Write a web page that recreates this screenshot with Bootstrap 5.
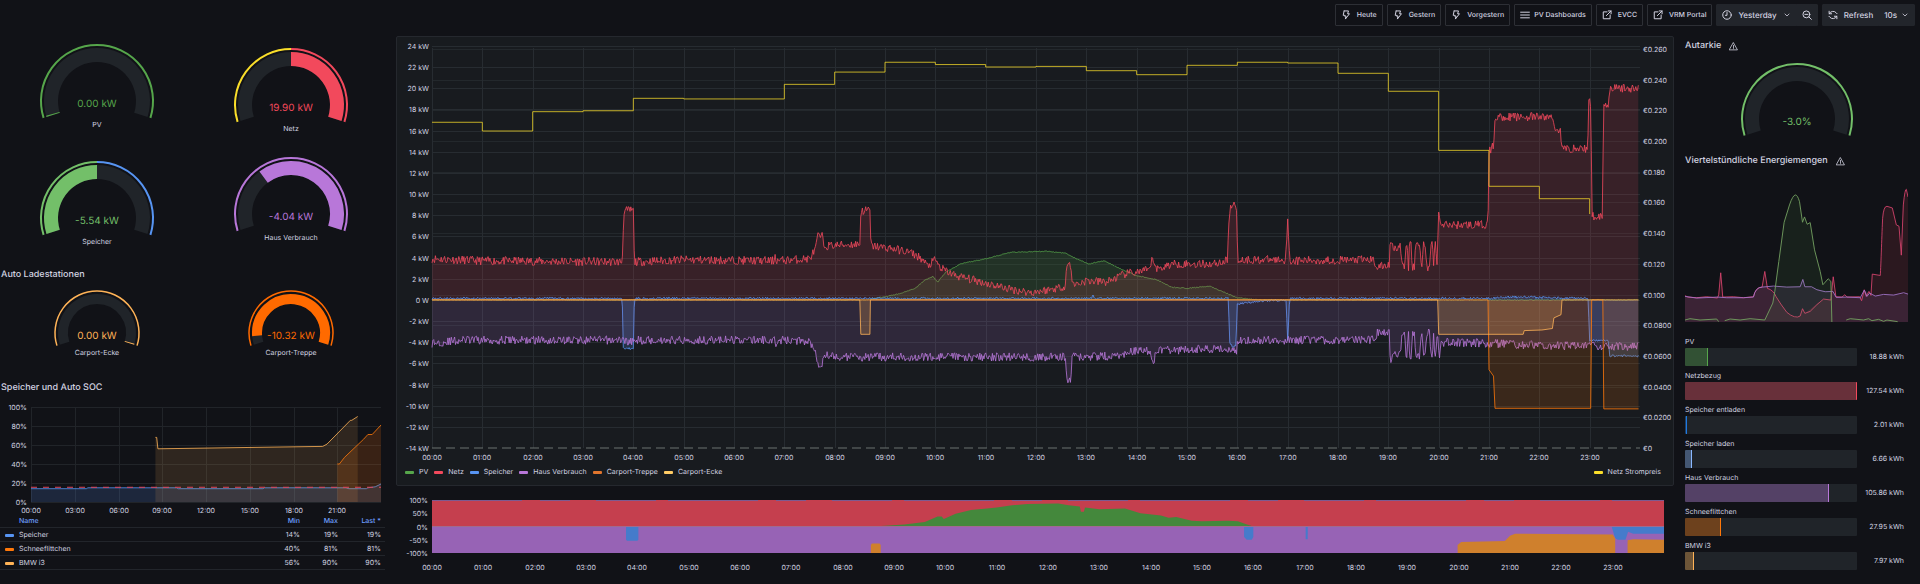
<!DOCTYPE html>
<html lang="de" data-bs-theme="dark">
<head>
<meta charset="utf-8">
<meta name="viewport" content="width=device-width, initial-scale=1">
<title>PV Dashboard</title>
<link href="https://cdn.jsdelivr.net/npm/bootstrap@5.3.0/dist/css/bootstrap.min.css" rel="stylesheet">
<style>
:root{--page:#111217;--panel:#181b1f;--line:#25282e;--ink:#d2d2e0;--track:#202429}
body{background:var(--page);color:var(--ink);font-family:Inter,"Liberation Sans",sans-serif;font-size:7px;line-height:12px;text-rendering:geometricPrecision}
button,a{text-rendering:inherit}
svg{display:block;overflow:hidden}
svg text{fill:var(--ink);font-size:7px}
.topbar{height:32px;padding:0 5px 6px}
.tool{--bs-btn-color:var(--ink);--bs-btn-font-size:7px;--bs-btn-line-height:12px;--bs-btn-padding-x:5px;--bs-btn-padding-y:0;--bs-btn-font-weight:500;--bs-btn-border-radius:1px;--bs-btn-border-color:#2d2f35;--bs-btn-hover-bg:#22252b;--bs-btn-hover-color:#fff;height:22px;display:flex;align-items:center;gap:6px;white-space:nowrap}
.tool-filled{--bs-btn-bg:#22252b;--bs-btn-border-color:#22252b;--bs-btn-font-size:8px}
.dash-menu{gap:4px}
.tool svg{width:10px;height:10px}
.tool svg.chev{width:8px;height:8px}
.icon{fill:none;stroke:currentColor;stroke-width:1.6;stroke-linecap:round;stroke-linejoin:round}
.board{display:grid;grid-template-columns:395fr 1279fr 246fr}
.board>*{min-width:0}
h2{font-size:9px;line-height:12px;font-weight:500;margin:0;color:var(--ink)}
.panel-title{padding-left:1px}
.gauges{padding-right:7px}
.lane-a{padding-top:11px;gap:29px}
.lane-b{padding-top:15px;gap:21px}
.power{height:237px}
.gauge{text-align:center}
.gauge svg{margin:0 auto}
.gauge svg text{font-size:10px;text-anchor:middle}
.chargers{padding-top:8px;height:101px}
.autarky{margin-top:10px;margin-bottom:18px}
.soc{padding-left:4px;padding-right:9px}
.legend-table{--bs-table-bg:transparent;--bs-table-color:var(--ink);--bs-table-border-color:#22252b;font-size:7px;line-height:12px;width:385px;margin:0}
.legend-table>:not(caption)>*>*{padding:1px 0 0;text-align:right}
.legend-table>:not(caption)>*>:first-child{text-align:left;padding-left:5px}
.legend-table>:not(caption)>*>:last-child{padding-right:4px}
.legend-table th{font-weight:500}
.legend-table thead th{color:#6e9fff}
.legend-table thead th:first-child{text-indent:14px}
.legend-table tbody th{font-weight:400}
.swatch{display:inline-block;width:9px;height:3px;border-radius:1px;margin-right:5px;vertical-align:middle}
.main-panel{--bs-card-bg:var(--panel);--bs-card-border-color:var(--line);--bs-card-border-radius:2px;margin:4px 0 0 1px;height:450px}
.plot-legend{padding:2px 12px 0 8px;gap:6px}
.share{margin:4px 0 0 2px}
.side{padding:8px 12px 0 11px}
.side h2{gap:8px}
.side .icon{width:9px;height:9px;stroke-width:1.4}
.energy{height:138px;margin-top:18px}
.energy svg{width:100%;height:100%}
.energy path{vector-effect:non-scaling-stroke;stroke-width:1}
.usage{padding:13px 4px 0 0;gap:4px}
.bar-track{--bs-progress-height:18px;--bs-progress-bg:var(--track);--bs-progress-border-radius:1px;flex:1 1 auto}
.bar-fill{border-right:1px solid}
.bar-value{width:47px;text-align:right;white-space:nowrap}
</style>
</head>
<body>
<svg width="0" height="0" class="position-absolute" aria-hidden="true">
  <symbol id="bolt" viewBox="0 0 16 16"><path d="M5 1.500h7L10.500 6h3L7 14.500 8 9.500H5.500M5 1.500 3.500 8.500h2"/></symbol>
  <symbol id="menu" viewBox="0 0 16 16"><path d="M1 3.500h14M1 8h14M1 12.500h14"/></symbol>
  <symbol id="ext" viewBox="0 0 16 16"><path d="M8 3H2v11h11V8M10 1.500h4.500V6M14.500 1.500 7 9"/></symbol>
  <symbol id="clock" viewBox="0 0 16 16"><circle cx="8" cy="8" r="6.800"/><path d="M8 4v4.500H5.500"/></symbol>
  <symbol id="chev" viewBox="0 0 16 16"><path d="m4 6 4 4 4-4"/></symbol>
  <symbol id="zoom" viewBox="0 0 16 16"><circle cx="7" cy="7" r="5.500"/><path d="M4.500 7h5M11 11l4 4"/></symbol>
  <symbol id="sync" viewBox="0 0 16 16"><path d="M2 6a6.500 6.500 0 0 1 11-1.500L14.500 6M14 10a6.500 6.500 0 0 1-11 1.500L1.500 10M1.800 2v4h4M14.200 14v-4h-4"/></symbol>
  <symbol id="warn" viewBox="0 0 16 16"><path d="M8 1.500 15 14H1ZM8 6v4M8 11.800v.2"/></symbol>
</svg>

<header class="topbar d-flex justify-content-end align-items-end gap-1">
  <button type="button" class="btn tool"><svg class="icon"><use href="#bolt"/></svg>Heute</button>
  <button type="button" class="btn tool"><svg class="icon"><use href="#bolt"/></svg>Gestern</button>
  <button type="button" class="btn tool"><svg class="icon"><use href="#bolt"/></svg>Vorgestern</button>
  <button type="button" class="btn tool dash-menu"><svg class="icon"><use href="#menu"/></svg>PV Dashboards</button>
  <a href="#evcc" class="btn tool"><svg class="icon"><use href="#ext"/></svg>EVCC</a>
  <a href="#vrm" class="btn tool"><svg class="icon"><use href="#ext"/></svg>VRM Portal</a>
  <div class="btn-group">
    <button type="button" class="btn tool tool-filled"><svg class="icon"><use href="#clock"/></svg>Yesterday<svg class="icon chev"><use href="#chev"/></svg></button>
    <button type="button" class="btn tool tool-filled" aria-label="Zoom out"><svg class="icon"><use href="#zoom"/></svg></button>
  </div>
  <div class="btn-group">
    <button type="button" class="btn tool tool-filled"><svg class="icon"><use href="#sync"/></svg>Refresh</button>
    <button type="button" class="btn tool tool-filled gap-1">10s<svg class="icon chev"><use href="#chev"/></svg></button>
  </div>
</header>

<main class="board">
  <section>
    <div class="gauges power row g-0">
      <div class="col-6 lane-a d-flex flex-column">
        <div class="gauge" data-gauge="57" data-value="0.00 kW" data-color="#56a64b" data-from="0" data-to="0.006"><div>PV</div></div>
        <div class="gauge" data-gauge="57" data-value="-5.54 kW" data-color="#73bf69" data-from="0" data-to="0.5" data-rest="#5794f2"><div>Speicher</div></div>
      </div>
      <div class="col-6 lane-b d-flex flex-column">
        <div class="gauge" data-gauge="57" data-value="19.90 kW" data-color="#f2495c" data-from="0.5" data-to="1" data-rest="#fade2a"><div>Netz</div></div>
        <div class="gauge" data-gauge="57" data-value="-4.04 kW" data-color="#b877d9" data-from="0.33" data-to="1"><div>Haus Verbrauch</div></div>
      </div>
    </div>
    <h2 class="panel-title">Auto Ladestationen</h2>
    <div class="gauges chargers row g-0">
      <div class="col-6 gauge" data-gauge="43" data-value="0.00 kW" data-color="#ffb357" data-from="0.993" data-to="1"><div>Carport-Ecke</div></div>
      <div class="col-6 gauge" data-gauge="43" data-value="-10.32 kW" data-color="#ff6a00" data-from="0.06" data-to="1"><div>Carport-Treppe</div></div>
    </div>
    <h2 class="panel-title">Speicher und Auto SOC</h2>
    <div class="soc" id="soc"></div>
    <table class="table legend-table">
      <colgroup><col><col style="width:38px"><col style="width:38px"><col style="width:47px"></colgroup>
      <thead><tr><th scope="col">Name</th><th scope="col">Min</th><th scope="col">Max</th><th scope="col">Last *</th></tr></thead>
      <tbody>
        <tr><th scope="row"><span class="swatch" style="background:#5794f2"></span>Speicher</th><td>14%</td><td>19%</td><td>19%</td></tr>
        <tr><th scope="row"><span class="swatch" style="background:#ff780a"></span>Schneeflittchen</th><td>40%</td><td>81%</td><td>81%</td></tr>
        <tr><th scope="row"><span class="swatch" style="background:#ffb357"></span>BMW i3</th><td>56%</td><td>90%</td><td>90%</td></tr>
      </tbody>
    </table>
  </section>

  <section>
    <div class="card main-panel">
      <div id="power"></div>
      <div class="plot-legend d-flex">
        <span><span class="swatch" style="background:#56a64b"></span>PV</span>
        <span><span class="swatch" style="background:#f2495c"></span>Netz</span>
        <span><span class="swatch" style="background:#5794f2"></span>Speicher</span>
        <span><span class="swatch" style="background:#b877d9"></span>Haus Verbrauch</span>
        <span><span class="swatch" style="background:#e0752d"></span>Carport-Treppe</span>
        <span><span class="swatch" style="background:#ffcb65"></span>Carport-Ecke</span>
        <span class="ms-auto"><span class="swatch" style="background:#fade2a"></span>Netz Strompreis</span>
      </div>
    </div>
    <div class="share" id="share"></div>
  </section>

  <aside class="side">
    <h2 class="d-flex align-items-center">Autarkie<svg class="icon"><use href="#warn"/></svg></h2>
    <div class="gauge autarky" data-gauge="56" data-value="-3.0%" data-color="#73bf69" data-from="0" data-to="0"></div>
    <h2 class="d-flex align-items-center">Viertelstündliche Energiemengen<svg class="icon"><use href="#warn"/></svg></h2>
    <div class="energy">
      <svg viewBox="75 460 668 415" preserveAspectRatio="none" aria-hidden="true">
        <path fill="#f2495c" fill-opacity=".12" stroke="none" d="M75 797 174 799 182 724 190 799 280 797Q286 767 306 767L314 720 322 771Q340 776 348 796L380 843Q405 870 420 852L427 832 434 846 450 833 470 817 490 803 512 806 519 736 527 796 604 799 612 780 632 792 636 728 660 732C662 700 665 600 667 560Q670 523 680 524L696 529 708 580 716 584 723 671 729 520Q734 470 738 473L743 496V872H75Z"/>
        <path fill="#b877d9" fill-opacity=".12" stroke="none" d="M75 797 280 798Q286 767 306 767L420 766 427 744 434 766 450 766Q480 780 520 780L528 796 600 798 612 776 640 793 743 788V872H75Z"/>
        <path fill="none" stroke="#d9446f" stroke-opacity=".85" d="M75 793 84 797 110 799 140 796 172 800 176 790 182 724 188 797 220 796 250 799 280 796Q286 767 306 767L314 720 322 771Q340 776 348 796L362 818 380 843Q405 864 420 854L427 832 434 846 450 840 470 820 490 803 512 806 519 736 527 796 545 797 554 790 560 797 598 796 604 808 612 775 618 795 626 780 632 792 636 728 660 732C662 700 665 600 667 560Q670 523 680 524L696 529 708 580 716 584 723 671 729 520Q734 470 738 473L743 496"/>
        <path fill="none" stroke="#a477cf" stroke-opacity=".85" d="M75 795 110 800 172 797 200 799 250 799 280 797Q286 767 306 767L340 764 380 767 420 766 428 744 434 766 454 766 470 775 495 781 518 780 528 798 560 797 600 799 612 776 620 795 628 785 645 794 670 789 700 791 730 784 743 788"/>
        <path fill="#56a64b" fill-opacity=".1" stroke="#73a060" stroke-opacity=".9" d="M75 866 90 862 120 866 170 863 176 871M194 868 210 863 240 866 270 862 314 866 338 815 344 780 356 690 372 572 388 520Q398 490 406 490 412 490 418 510L427 572 433 556 441 578 450 573 463 655 480 720 488 760 504 742 512 750 515 872M558 866 570 862 610 866 625 862 635 868 655 864 670 870 680 866 712 871"/>
      </svg>
    </div>
    <div class="usage d-flex flex-column" id="usage"></div>
  </aside>
</main>

<script src="https://cdn.jsdelivr.net/npm/bootstrap@5.3.0/dist/js/bootstrap.bundle.min.js"></script>
<script>
const polar = (c, cy, r, f) => {
  const a = (197.5 - f * 215) * Math.PI / 180;
  return [c + r * Math.cos(a), cy - r * Math.sin(a)].map(v => v.toFixed(2)).join(' ');
};
const ring = (c, cy, r, f, t, color, w) =>
  `<path d="M${polar(c, cy, r, f)}A${r} ${r} 0 ${(t - f) * 215 > 180 ? 1 : 0} 1 ${polar(c, cy, r, t)}" fill="none" stroke="${color}" stroke-width="${w}"/>`;

document.querySelectorAll('[data-gauge]').forEach(el => {
  const r = +el.dataset.gauge, { value, color, rest } = el.dataset;
  const f = +el.dataset.from, t = +el.dataset.to;
  const c = r + 3, cy = r + 1, h = r > 50 ? cy + 18 : cy + 14;
  const w = r > 50 ? 14 : 10, mid = r - 4 - w / 2;
  let s = ring(c, cy, mid, 0, 1, '#202429', w);
  if (t > f) s += ring(c, cy, mid, f, t, color, w);
  if (rest) s += ring(c, cy, r - 1, 0, .5, f ? rest : color, 2) + ring(c, cy, r - 1, .5, 1, f ? color : rest, 2);
  else s += ring(c, cy, r - 1, 0, 1, color, r > 50 ? 2 : 1.5);
  s += `<text x="${c}" y="${cy + 6}" style="fill:${color}">${value}</text>`;
  el.insertAdjacentHTML('afterbegin', `<svg width="${2 * c}" height="${h}">${s}</svg>`);
});

/* pseudo random values with a fixed seed, so each redraw looks the same */
const rng = seed => () => (seed = (seed * 16807) % 2147483647) / 2147483647 - .5;
const at = (pts, h) => {
  for (let i = 1; i < pts.length; i++)
    if (h <= pts[i][0]) {
      const [a, va] = pts[i - 1], [b, vb] = pts[i];
      return b === a ? vb : va + (vb - va) * (h - a) / (b - a);
    }
  return pts[pts.length - 1][1];
};
const noisy = (pts, amp, seed) => {
  const rnd = rng(seed), out = [];
  for (let h = 0; h <= 23.97; h += 1 / 60) out.push([h, at(pts, h) + rnd() * amp]);
  return out;
};
const hh = h => String(h).padStart(2, '0') + ':00';
const poly = (pts, X, Y) => pts.map(([h, v], i) => (i ? 'L' : 'M') + X(h).toFixed(1) + ' ' + Y(v).toFixed(1)).join('');
const series = (pts, X, Y, color, fo, so = .8) => {
  const d = poly(pts, X, Y), z = Y(0).toFixed(1);
  return `<path d="${d}L${X(pts[pts.length - 1][0]).toFixed(1)} ${z}L${X(pts[0][0]).toFixed(1)} ${z}Z" fill="${color}" fill-opacity="${fo}"/>` +
    `<path d="${d}" fill="none" stroke="${color}" stroke-opacity="${so}"/>`;
};
const hline = (y, a, b, c = '#272c31') => `<path d="M${a} ${Math.round(y) + .5}H${b}" stroke="${c}"/>`;
const vline = (x, a, b, c = '#272c31') => `<path d="M${Math.round(x) + .5} ${a}V${b}" stroke="${c}"/>`;

const wave = (hi, lo) => [[19.24, hi], [19.27, lo], [19.33, lo], [19.34, hi], [19.37, hi], [19.4, lo], [19.42, hi], [19.45, hi], [19.48, lo], [19.52, lo], [19.54, hi], [19.62, hi], [19.66, lo], [19.7, hi], [19.74, hi], [19.76, lo], [19.82, lo], [19.84, hi], [19.88, hi], [19.9, lo], [19.92, hi], [19.94, hi], [19.97, lo]];

const netz = noisy([[0, 3.9], [1, 3.7], [3.78, 3.6], [3.81, 8.4], [4, 8.5], [4.02, 3.6], [5, 3.8], [6.8, 3.7], [6.82, 4.5], [6.84, 3.7], [7.5, 3.9], [7.62, 4.8], [7.66, 6], [7.75, 6], [7.79, 5.1], [8.5, 5.3], [8.52, 8.4], [8.7, 8.5], [8.72, 5.1], [9.1, 4.9], [9.5, 4.5], [9.7, 4], [9.85, 3.2], [10, 3.8], [10.1, 3], [10.4, 2.3], [11, 1.6], [11.5, 1], [11.9, .7], [12.3, 1], [12.58, 1.3], [12.61, 3.3], [12.69, 3.3], [12.73, 1.4], [13, 1.8], [13.4, 1.7], [13.8, 2.5], [14.25, 2.8], [14.32, 4], [14.4, 2.9], [14.7, 3.4], [15.5, 3.4], [15.8, 3.7], [15.84, 8.4], [15.9, 8.9], [15.98, 9], [16.01, 3.8], [16.96, 3.8], [17, 7.8], [17.04, 3.7], [18.7, 3.8], [18.78, 3.1], [19.02, 3.3], [19.04, 5.8], [19.1, 5], [19.22, 5], ...wave(5.2, 3.1), [20, 8.6], [20.03, 7.1], [20.98, 7.1], [21, 14], [21.09, 14.6], [21.12, 17.3], [22.25, 17.3], [22.3, 16.3], [22.42, 16], [22.45, 14.3], [22.96, 14.3], [22.98, 18.8], [23.02, 18.6], [23.05, 7.9], [23.25, 8], [23.28, 18.4], [23.37, 18.5], [23.39, 20], [24, 20]], .8, 11);
const house = noisy([[0, -4.1], [.6, -3.8], [3.8, -3.8], [4, -4], [4.1, -3.8], [6.8, -3.8], [6.82, -4.6], [6.85, -3.8], [7.5, -3.9], [7.62, -4.8], [7.66, -6], [7.75, -6], [7.79, -5.1], [8, -5.4], [12.58, -5.4], [12.61, -7.5], [12.69, -7.5], [12.72, -5.4], [13.6, -5.3], [14, -4.8], [14.28, -4.8], [14.33, -6.1], [14.38, -4.8], [15.8, -4.6], [15.98, -4.9], [16.01, -3.8], [18.7, -3.8], [18.78, -3.1], [19.02, -3.2], [19.04, -5.7], [19.1, -5.1], [19.22, -5.1], ...wave(-5.3, -3.1), [20.02, -5.3], [20.04, -4], [21, -4.1], [22, -4.3], [24, -4.4]], .8, 29);
const battery = noisy([[0, .15], [3.78, .15], [3.8, -4.6], [4, -4.6], [4.02, .15], [13.1, .15], [13.13, .6], [13.16, .15], [15.82, .15], [15.85, -4], [15.9, -4.4], [15.97, -4.4], [16, -.4], [16.5, -.1], [16.97, 0], [17, -3.9], [17.04, .15], [21, .15], [21.4, .28], [22.9, .15], [22.97, .1], [23, -3.85], [23.37, -3.85], [23.4, -5.3], [24, -5.3]], .2, 5);
const solar = noisy([[0, 0], [8.6, 0], [9, .3], [9.3, .6], [9.6, 1.1], [9.8, 1.9], [9.95, 2.2], [10.05, 1.7], [10.2, 2.6], [10.5, 3.4], [11, 3.9], [11.5, 4.5], [12.2, 4.6], [12.6, 4.4], [12.8, 3.9], [13.05, 3.4], [13.35, 3.7], [13.7, 2.9], [14, 2.3], [14.4, 1.9], [14.7, 1.2], [15, 1.1], [15.45, 1.3], [15.7, .8], [16, .2], [16.4, 0], [24, 0]], .08, 3);
const corner = [[0, 0], [8.5, 0], [8.52, -3.25], [8.7, -3.25], [8.71, 0], [19.98, 0], [20, -3.25], [21.68, -3.25], [21.7, -2.9], [22.05, -2.85], [22.26, -2.7], [22.29, -1.7], [22.43, -1.4], [22.45, 0], [23.97, 0]];
const stairs = [[0, 0], [20.98, 0], [21, -6.6], [21.09, -7.2], [21.12, -10.25], [23.02, -10.25], [23.04, 0], [23.26, 0], [23.28, -10.3], [23.97, -10.3]];
const price = [.2122, .2065, .2191, .2197, .2278, .2274, .2274, .2369, .2449, .2513, .2498, .2482, .2486, .2458, .2432, .2493, .2513, .2508, .2441, .2324, .1939, .1705, .1624];

function drawPower() {
  const el = document.getElementById('power'), w = el.clientWidth, l = 35, r = w - 33, top = 9, bot = 411;
  const X = h => l + h * (r - l) / 24, Y = v => bot - (v + 14) * (bot - top) / 38, P = p => bot - p * 1535;
  let s = '';
  for (let v = 24; v >= -14; v -= 2) {
    if (v > -14) s += hline(Y(v), l, r);
    s += `<text x="${l - 3}" y="${Math.round(Y(v)) + 3}" text-anchor="end">${v ? v + ' kW' : '0 W'}</text>`;
  }
  for (let i = 0; i <= 13; i++) {
    const p = i * .02;
    if (i) s += hline(P(p), l, r, '#23282c');
    s += `<text x="${r + 3}" y="${Math.round(P(p)) + 3}">€${i ? p.toFixed(p < .09 ? 4 : 3) : 0}</text>`;
  }
  for (let h = 0; h < 24; h++) {
    s += vline(X(h), top + 2, bot);
    s += `<text x="${Math.round(X(h))}" y="${bot + 12}" text-anchor="middle">${hh(h)}</text>`;
  }
  s += series(solar, X, Y, '#56a64b', .17) + series(netz, X, Y, '#f2495c', .15) +
    series(battery, X, Y, '#5794f2', .2) + series(house, X, Y, '#b877d9', .15) +
    series(stairs, X, Y, '#ff780a', .15) + series(corner, X, Y, '#ffb357', .22);
  let d = `M${X(0)} ${P(price[0])}`;
  price.forEach((p, i) => d += `V${P(p)}H${X(i + 1)}`);
  s += `<path d="${d}V${P(.1524)}" fill="none" stroke="#fade2a" stroke-opacity=".75"/>`;
  s += `<path d="M${l} ${bot}H${r}" stroke="#6b7270" stroke-dasharray="9 5"/>`;
  el.innerHTML = `<svg width="${w}" height="427">${s}</svg>`;
}

function drawShare() {
  const el = document.getElementById('share'), w = el.clientWidth, l = 35, r = w - 10, top = 10, bot = 63, z = 36.5;
  const X = h => l + h * (r - l) / 24, Y = v => z - v * 26.5;
  const area = (pts, base, c) => `<path d="${poly(pts, X, Y)}L${X(pts[pts.length - 1][0])} ${Y(base)}L${X(pts[0][0])} ${Y(base)}Z" fill="${c}"/>`;
  let s = area([[0, 1], [24, 1]], 0, '#c53f4e') + area([[0, 0], [24, 0]], -1, '#9763b5');
  s += area([[8.6, 0], [9.2, .07], [9.6, .17], [9.85, .38], [9.93, .38], [9.97, .28], [10.2, .48], [10.5, .62], [11, .72], [11.3, .8], [11.6, .85], [12.2, .87], [12.4, .8], [12.62, .75], [12.64, .56], [12.7, .56], [12.72, .72], [13, .65], [13.5, .68], [13.8, .5], [14.2, .42], [14.35, .33], [14.5, .36], [14.8, .22], [15, .2], [15.5, .22], [15.7, .2], [15.85, .1], [16, 0]], 0, '#44883c');
  const blue = '#457bcb', amber = '#cf802d';
  s += area([[3.78, -.5], [3.8, -.54], [4, -.54], [4.02, -.5]], 0, blue);
  s += area([[15.82, -.4], [15.87, -.5], [15.97, -.5], [16, -.4]], 0, blue);
  s += area([[17.02, -.48], [17.06, -.48]], 0, blue);
  s += area([[22.98, 0], [23.05, -.44], [23.1, -.5], [23.25, -.5], [23.3, -.2], [23.4, -.27], [24, -.27]], 0, blue);
  s += area([[8.55, -.7], [8.57, -.64], [8.72, -.64], [8.74, -.7]], -1, amber);
  s += area([[19.98, -.7], [20.05, -.58], [20.9, -.55], [21, -.35], [21.1, -.27], [23, -.3], [23.05, -.45]], -1, amber);
  s += area([[23.29, -.52], [23.4, -.48], [24, -.5]], -1, amber);
  s += `<path d="M${l} ${top + .5}H${r}" stroke="#7d5a90" stroke-dasharray="90 18 30 26 60 12"/><path d="M${l} ${z}H${r}" stroke="#a06a8e"/>`;
  ['100%', '50%', '0%', '-50%', '-100%'].forEach((t, i) =>
    s += `<text x="${l - 4}" y="${Math.round(top + i * 13.25) + 3}" text-anchor="end">${t}</text>`);
  for (let h = 0; h < 24; h++) s += `<text x="${Math.round(X(h))}" y="80" text-anchor="middle">${hh(h)}</text>`;
  el.innerHTML = `<svg width="${w}" height="86">${s}</svg>`;
}

function drawSoc() {
  const el = document.getElementById('soc'), w = el.clientWidth - 13, l = 27, r = w - 5, top = 13, bot = 108;
  const X = h => l + h * (r - l) / 24, Y = v => bot - v * .95;
  let s = '';
  for (let v = 0; v <= 100; v += 20)
    s += hline(Y(v), l, r, '#212429') + `<text x="${l - 4}" y="${Y(v) + 3}" text-anchor="end">${v}%</text>`;
  for (let h = 0; h < 24; h += 3)
    s += vline(X(h), top, bot, '#212429') + `<text x="${Math.round(X(h))}" y="${bot + 11}" text-anchor="middle">${hh(h)}</text>`;
  s += series([[0, 14], [3.8, 14], [3.9, 15], [10, 15], [10.1, 14], [15.9, 14], [16, 15], [21.6, 15], [21.8, 14], [23, 14], [23.1, 15], [23.6, 16], [24, 19]], X, Y, '#5794f2', .17);
  s += series([[8.53, 68], [8.62, 68], [8.7, 56], [20, 58.5], [20.3, 61], [21.9, 86], [22, 86], [22.4, 90]], X, Y, '#ffb357', .13);
  s += series([[21, 40], [21.15, 40], [21.5, 47], [22.8, 66], [23.1, 71], [23.4, 71], [24, 81]], X, Y, '#ff780a', .17);
  s += `<path d="M${l} ${Y(15.5)}H${r}" stroke="#e0455c" stroke-dasharray="6 6"/>`;
  el.innerHTML = `<svg width="${w}" height="120">${s}</svg>`;
}

const usage = [['PV', 18.88, '#56a64b', 13.5], ['Netzbezug', 127.54, '#f2495c', 100], ['Speicher entladen', 2.01, '#1f78e0', 1], ['Speicher laden', 6.66, '#8ab8ff', 4], ['Haus Verbrauch', 105.86, '#b877d9', 84], ['Schneeflittchen', 27.95, '#ff780a', 21], ['BMW i3', 7.97, '#ffb357', 5]];
document.getElementById('usage').innerHTML = usage.map(([n, v, c, p]) =>
  `<div><div>${n}</div><div class="d-flex align-items-center"><div class="progress bar-track" role="progressbar" aria-label="${n}" aria-valuenow="${p}" aria-valuemin="0" aria-valuemax="100"><div class="progress-bar bar-fill" style="width:${p}%;background:${c}59;border-color:${c}"></div></div><div class="bar-value">${v.toFixed(2)} kWh</div></div></div>`).join('');

const draw = () => { drawPower(); drawShare(); drawSoc(); };
draw();
addEventListener('resize', draw);
</script>
</body>
</html>
